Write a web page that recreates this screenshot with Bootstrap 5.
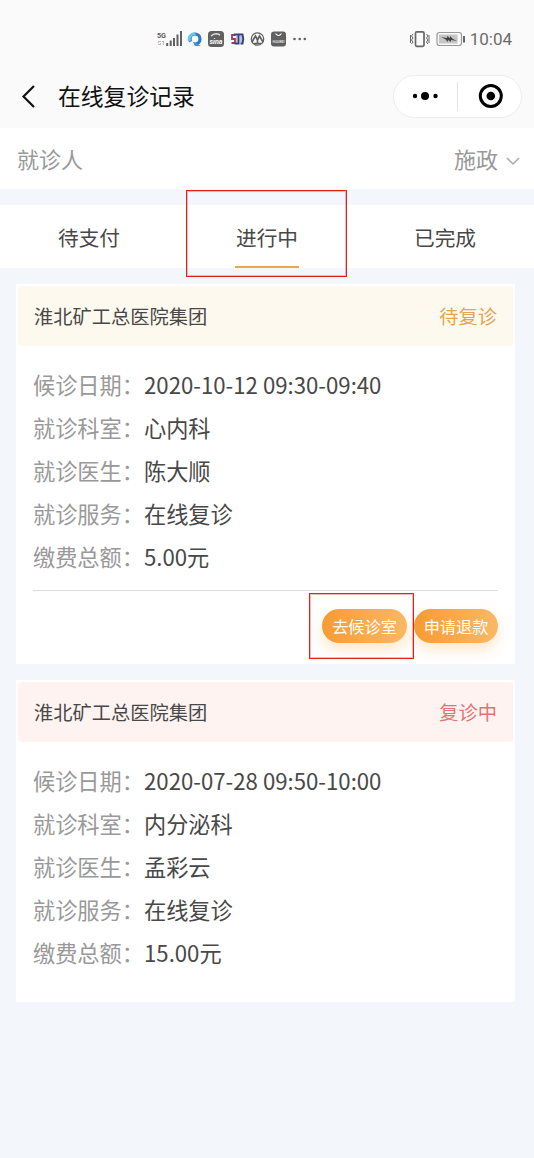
<!DOCTYPE html>
<html lang="zh-CN">
<head>
<meta charset="utf-8">
<meta name="viewport" content="width=device-width, initial-scale=1">
<title>在线复诊记录</title>
<link href="https://cdn.jsdelivr.net/npm/bootstrap@5.3.0/dist/css/bootstrap.min.css" rel="stylesheet">
<style>
  body { font-family: "Noto Sans CJK SC", sans-serif; background: #f3f7fb; color: #484848; min-height: 1158px; overflow-x: hidden; }
  .status-bar { height: 65px; background: #fafafa; padding: 26px 22px 0 157px; }
  .clock { font: 17px/27px Roboto, sans-serif; color: #6b6b6b; }
  .title-bar { height: 63px; background: #fafafa; padding: 0 12px 0 20px; }
  .title-bar h1 { font-size: 22.8px; font-weight: 400; line-height: 32px; padding-bottom: 2px; color: #111; }
  .capsule { width: 129px; height: 43px; border: 1px solid #ececec; border-radius: 22px; }
  .patient { height: 61px; padding: 0 14px 0 17px; font-size: 22px; color: #999; }
  .patient svg { margin-top: 4px; }
  .tabs { height: 63px; margin-top: 16px; font-size: 20.7px; }
  .tab { border: 0; background: none; color: #484848; padding: 2px 0 0; }
  .tab-line { left: 57px; bottom: 0; width: 64px; height: 2px; background: #e5a951; }
  .marker { border: 1px solid #e1201c; box-shadow: inset 0 0 0 1px rgba(225,32,28,.3); pointer-events: none; z-index: 3; }
  .marker-tab { left: 8px; top: -15px; width: 161px; height: 87px; }
  .marker-btn { left: -13px; top: -16px; width: 105px; height: 66px; }
  .record { margin: 16px 19px 0 16px; background: #fff; padding: 2px 2px 0; height: 322px; }
  .record.with-actions { height: 380px; }
  .record-head { height: 60px; padding: 0 16px; font-size: 19.25px; border-radius: 4px; }
  .waiting { background: #fef9ef; }
  .ongoing { background: #fef3f1; }
  .state-waiting { color: #e3a550; }
  .state-ongoing { color: #e27375; }
  .details { margin: 0 15px; padding-top: 17px; font-size: 22.2px; line-height: 43.1px; }
  .details dt { font-weight: 400; color: #999; width: 111px; }
  .actions { margin: 12px 15px 0; border-top: 1px solid #dedede; padding-top: 18px; gap: 7px; }
  .pill { height: 34px; border-radius: 17px; color: #fff; font-size: 16.2px; line-height: 34px; background: linear-gradient(90deg, #f79b34, #fab865); box-shadow: 0 7px 14px rgba(250,180,90,.3); border: 0; padding: 0; width: 85px; white-space: nowrap; }
  .pill:last-child { width: 84px; }
</style>
</head>
<body>
<header>
  <div class="status-bar d-flex align-items-start justify-content-between">
    <svg width="152" height="26" viewBox="157 26 152 26" fill="#606060">
      <text x="157" y="38" font-family="Roboto, sans-serif" font-size="8" font-weight="700" textLength="9" lengthAdjust="spacingAndGlyphs">5G</text>
      <path d="M158 41h3v1h-2v1h2v2h-3v-1h2v-1h-2zM162 41h2v4h-1v-3h-1z" fill="#bbb"/>
      <path d="M166.200 43h2v3h-2zM169.700 40.500h2V46h-2zM173 38h2v8h-2zM176.500 34.500h2V46h-2zM180 31h2v15h-2z"/>
      <circle cx="195" cy="39" r="5" fill="none" stroke="#2e78c7" stroke-width="3.200"/>
      <path d="M189.500 41a5.500 5.500 0 0 1 6-7.200" fill="none" stroke="#67c9e9" stroke-width="3"/>
      <path d="M189 42l4-1 2 5-4-1z" fill="#fafafa"/>
      <path d="M193 42l8 4h-6z" fill="#3a9bdc"/>
      <rect x="208" y="31" width="16" height="16" rx="3.500"/>
      <path d="M211 36q4-4 9-1" stroke="#ddd" fill="none" stroke-width="1.500"/>
      <text x="209.500" y="43.500" font-family="Roboto, sans-serif" font-size="7" font-weight="700" font-style="italic" fill="#fff" textLength="13" lengthAdjust="spacingAndGlyphs">sina</text>
      <g fill="none" stroke-width="1.800"><path d="M235.500 35h-3.500v4h3v4h-3.500" stroke="#a53c64"/><path d="M234 34.500h4.500v9h-4M239.500 34.500h3q1.500 4.500 0 9h-2" stroke="#33417f" stroke-width="2"/><path d="M237 36v7M241 36v7" stroke="#7f86b2" stroke-width="1"/></g>
      <circle cx="257.500" cy="39" r="6.200" fill="none" stroke="#606060" stroke-width="1.300"/>
      <path d="M252 42l3.500-6 2 4 2-4 3.500 6M254 43.500h7M257.500 40v4" fill="none" stroke="#606060" stroke-width="1.700"/>
      <rect x="271" y="31.500" width="15" height="15" rx="3"/>
      <path d="M275.500 33.500q3 4 6 0" stroke="#fff" fill="none" stroke-width="1.200"/>
      <text x="272.500" y="42.500" font-family="Roboto, sans-serif" font-size="4" font-weight="700" fill="#ddd" textLength="12" lengthAdjust="spacingAndGlyphs">HUAWEI</text>
      <circle cx="294.500" cy="39" r="1.300"/><circle cx="299.700" cy="39" r="1.300"/><circle cx="304.800" cy="39" r="1.300"/>
    </svg>
    <div class="d-flex">
      <svg width="61" height="26" viewBox="410 26 61 26" fill="none" stroke="#666">
        <rect x="416.500" y="31.800" width="8.500" height="14.500" rx="1.300" stroke-width="1.700"/>
        <path d="M414 34l-1.500 2 1.500 2-1.500 2 1.500 2-1.500 2M411.500 35v8M427.500 34l1.500 2-1.500 2 1.500 2-1.500 2 1.500 2M430 35v8" stroke-width="1"/>
        <rect x="438" y="32.500" width="24.500" height="13" rx="2.500" stroke="#999" stroke-width="1.200"/>
        <rect x="440" y="34.500" width="18.500" height="9" fill="#c5c5c5" stroke="none"/>
        <path d="M442 37l6 1v-2l3 2v-2l3 3 4 2-6-1v2l-3-2v2l-3-3z" fill="#444" stroke="none"/>
        <path d="M465 36v6.500" stroke-width="2"/>
      </svg>
      <span class="clock">10:04</span>
    </div>
  </div>
  <div class="title-bar d-flex align-items-center">
    <svg width="38" height="26" viewBox="0 1 38 26" fill="none" stroke="#111" stroke-width="2.200"><path d="M14 3L3.500 13.500 14 24"/></svg>
    <h1 class="mb-0 flex-grow-1">在线复诊记录</h1>
    <div class="capsule bg-white d-flex align-items-center">
      <svg width="127" height="41" viewBox="394 76 127 41">
        <circle cx="415" cy="96" r="2.200"/><circle cx="425" cy="96" r="4"/><circle cx="435.500" cy="96" r="2.200"/>
        <path d="M457.500 82v29" stroke="#e4e4e4"/>
        <circle cx="490.800" cy="96" r="10.500" fill="none" stroke="#000" stroke-width="3"/><circle cx="490.800" cy="96" r="4.300"/>
      </svg>
    </div>
  </div>
</header>
<section class="patient bg-white d-flex align-items-center justify-content-between">
  <span>就诊人</span>
  <span class="d-flex align-items-center">施政
    <svg class="ms-2" width="14" height="10" viewBox="0 0 14 10" fill="none" stroke="#aaa" stroke-width="1.500"><path d="M1 2l6 6 6-6"/></svg>
  </span>
</section>
<nav class="tabs bg-white row g-0">
  <button class="tab col-4">待支付</button>
  <button class="tab col-4 position-relative">进行中<span class="tab-line position-absolute"></span><span class="marker marker-tab position-absolute"></span></button>
  <button class="tab col-4">已完成</button>
</nav>
<main>
  <article class="record with-actions">
    <div class="record-head waiting d-flex align-items-center justify-content-between"><span>淮北矿工总医院集团</span><span class="state-waiting">待复诊</span></div>
    <dl class="details mb-0">
      <div class="d-flex"><dt>候诊日期：</dt><dd class="m-0">2020-10-12 09:30-09:40</dd></div>
      <div class="d-flex"><dt>就诊科室：</dt><dd class="m-0">心内科</dd></div>
      <div class="d-flex"><dt>就诊医生：</dt><dd class="m-0">陈大顺</dd></div>
      <div class="d-flex"><dt>就诊服务：</dt><dd class="m-0">在线复诊</dd></div>
      <div class="d-flex"><dt>缴费总额：</dt><dd class="m-0">5.00元</dd></div>
    </dl>
    <div class="actions d-flex justify-content-end">
      <button class="pill position-relative">去候诊室<span class="marker marker-btn position-absolute"></span></button>
      <button class="pill">申请退款</button>
    </div>
  </article>
  <article class="record">
    <div class="record-head ongoing d-flex align-items-center justify-content-between"><span>淮北矿工总医院集团</span><span class="state-ongoing">复诊中</span></div>
    <dl class="details mb-0">
      <div class="d-flex"><dt>候诊日期：</dt><dd class="m-0">2020-07-28 09:50-10:00</dd></div>
      <div class="d-flex"><dt>就诊科室：</dt><dd class="m-0">内分泌科</dd></div>
      <div class="d-flex"><dt>就诊医生：</dt><dd class="m-0">孟彩云</dd></div>
      <div class="d-flex"><dt>就诊服务：</dt><dd class="m-0">在线复诊</dd></div>
      <div class="d-flex"><dt>缴费总额：</dt><dd class="m-0">15.00元</dd></div>
    </dl>
  </article>
</main>
<script src="https://cdn.jsdelivr.net/npm/bootstrap@5.3.0/dist/js/bootstrap.bundle.min.js"></script>
</body>
</html>
